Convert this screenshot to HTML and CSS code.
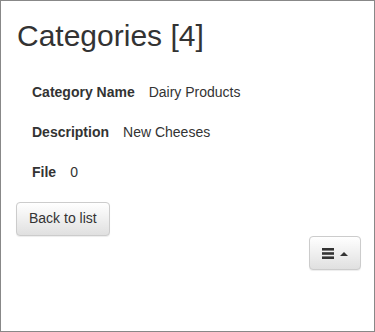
FILE: index.html
```html
<!DOCTYPE html>
<html lang="en">

<head>
  <meta charset="UTF-8">
  <meta name="viewport" content="width=device-width, initial-scale=1.0">
  <title>Categories</title>
  <link rel="stylesheet" href="styles.css">
</head>

<body>
  <div class="frame">
    <h2 class="title">Categories [4]</h2>

    <dl class="details">
      <div class="row">
        <dt>Category Name</dt>
        <dd>Dairy Products</dd>
      </div>
      <div class="row">
        <dt>Description</dt>
        <dd>New Cheeses</dd>
      </div>
      <div class="row">
        <dt>File</dt>
        <dd>0</dd>
      </div>
    </dl>

    <button class="btn">Back to list</button>

    <div class="actions">
      <button class="btn btn-menu" aria-label="Menu">
        <svg width="12" height="11" viewBox="0 0 12 11">
          <rect x="0" y="0" width="12" height="2.6" fill="#333" />
          <rect x="0" y="4.2" width="12" height="2.6" fill="#333" />
          <rect x="0" y="8.4" width="12" height="2.6" fill="#333" />
        </svg>
        <span class="caret"></span>
      </button>
    </div>
  </div>
</body>

</html>
```

FILE: styles.css
```css
* {
  box-sizing: border-box;
}

body {
  margin: 0;
  font-family: "Liberation Sans", Arial, sans-serif;
  font-size: 14px;
  line-height: 1.42857;
  color: #333;
  background-color: #fff;
}

.frame {
  height: 332px;
  border: 1px solid #888;
  padding: 18px 13px 0 15px;
}

.title {
  margin: 0;
  font-size: 30px;
  font-weight: 500;
  line-height: 1.1;
  padding-left: 1px;
}

.details {
  margin: 31px 0 0 0;
  padding-left: 16px;
}

.row {
  display: flex;
  gap: 14px;
  height: 40px;
}

.details dt {
  font-weight: bold;
}

.details dd {
  margin: 0;
}

.btn {
  display: inline-block;
  height: 34px;
  padding: 6px 12px;
  font-family: inherit;
  font-size: 14px;
  line-height: 1.42857;
  color: #333;
  border: 1px solid #ccc;
  border-radius: 4px;
  background-image: linear-gradient(to bottom, #fff 0, #e0e0e0 100%);
  box-shadow: inset 0 1px 0 rgba(255, 255, 255, 0.15), 0 1px 1px rgba(0, 0, 0, 0.075);
  cursor: pointer;
}

.details + .btn {
  margin-top: -1px;
}

.actions {
  display: flex;
  justify-content: flex-end;
}

.btn-menu {
  width: 52px;
  display: flex;
  align-items: center;
  justify-content: center;
  gap: 6px;
}

.caret {
  width: 0;
  height: 0;
  border-left: 4px solid transparent;
  border-right: 4px solid transparent;
  border-bottom: 4px solid #333;
  margin-top: 2px;
}
```
